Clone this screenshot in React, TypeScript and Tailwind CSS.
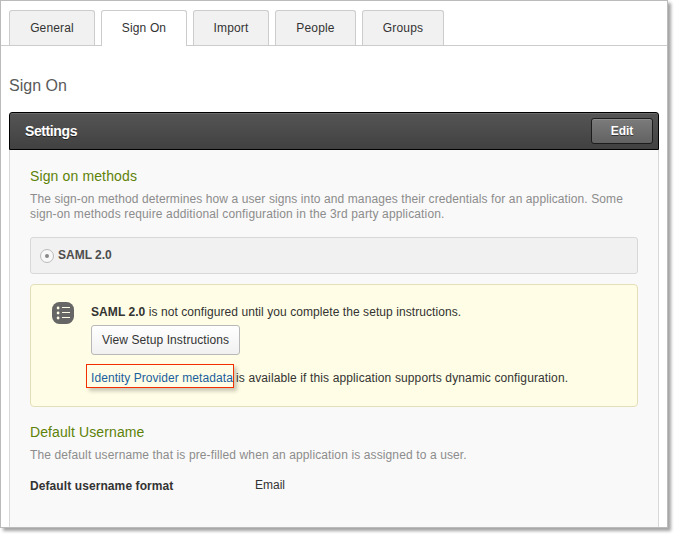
const tabs = [
  { label: 'General', width: 'w-[86px]' },
  { label: 'Sign On', width: 'w-[86px]', active: true },
  { label: 'Import', width: 'w-[76px]' },
  { label: 'People', width: 'w-[81px]' },
  { label: 'Groups', width: 'w-[82px]' },
];

function Tabs() {
  return (
    <nav className="flex h-[36px] gap-[6px] border-b border-[#cccccc] pl-2">
      {tabs.map((tab) => (
        <button
          key={tab.label}
          className={`${tab.width} ${
            tab.active ? 'h-[36px] bg-white' : 'h-[35px] bg-[#f1f1f1]'
          } flex shrink-0 justify-center rounded-t-[3px] border border-b-0 border-[#cccccc] pt-[9px] text-[12px] leading-4 tracking-[0.15px] text-[#333]`}
        >
          {tab.label}
        </button>
      ))}
    </nav>
  );
}

function ListIcon() {
  return (
    <svg className="block size-[22px]" viewBox="0 0 22 22">
      <rect width="22" height="22" rx="7.5" fill="#666666" />
      <g fill="#fffde5">
        <circle cx="6.1" cy="6" r="1.4" />
        <circle cx="6.1" cy="11" r="1.4" />
        <circle cx="6.1" cy="16" r="1.4" />
        <rect x="10" y="5" width="8" height="1" />
        <rect x="10" y="10" width="8" height="1" />
        <rect x="10" y="15" width="8" height="1" />
      </g>
    </svg>
  );
}

export default function App() {
  return (
    <div className="h-[534px] w-[674px] overflow-hidden bg-white font-['Liberation_Sans',Arial,sans-serif] text-[12px] text-[#333]">
      <div className="flex h-[528px] w-[668px] flex-col border border-[#bbbbbb] bg-white pt-[9px] shadow-[3px_3px_3px_rgba(0,0,0,0.36)]">
        <Tabs />
        <h1 className="mt-[30px] h-5 pl-2 text-[16px] leading-5 text-[#5a5a5a]">Sign On</h1>
        <section className="mx-2 mt-4 flex w-[650px] flex-1 flex-col">
          <header className="flex h-[38px] items-center justify-between rounded-t-[3px] border border-black bg-linear-to-b from-[#555] to-[#414141] pr-[5px] pl-[15px] shadow-[inset_0_1px_0_#6a6a6a]">
            <h2 className="text-[14px] font-bold tracking-[-0.4px] text-white [text-shadow:0_1px_0_#222]">Settings</h2>
            <button className="h-[26px] w-[62px] rounded-[3px] border border-[#1c1c1c] bg-linear-to-b from-[#7b7b7b] to-[#626262] pb-px text-[12px] font-bold text-white shadow-[inset_0_1px_0_#8c8c8c] [text-shadow:0_1px_0_#333]">
              Edit
            </button>
          </header>
          <div className="flex-1 border-x border-[#d8d8d8] bg-[#f9f9f9] px-5 pt-[17px]">
            <h3 className="h-[18px] text-[14px] leading-[18px] tracking-[0.13px] text-[#5e8208]">Sign on methods</h3>
            <p className="mt-[7px] text-[12px] leading-[15px] whitespace-nowrap text-[#8c8c8c]">
              <span className="tracking-[0.1px]">
                The sign-on method determines how a user signs into and manages their credentials for an application. Some
              </span>
              <br />
              <span className="tracking-[0.14px]">
                sign-on methods require additional configuration in the 3rd party application.
              </span>
            </p>
            <div className="mt-[15px] flex h-[37px] w-[608px] items-center rounded-[3px] border border-[#d8d8d8] bg-[#f1f1f1] pl-[9px]">
              <span className="flex size-[14px] items-center justify-center rounded-full border border-[#bbb] bg-[#f8f8f8]">
                <span className="size-1 rounded-full bg-[#888]" />
              </span>
              <b className="ml-1 pb-[2px] text-[#4d4d4d]">SAML 2.0</b>
            </div>
            <div className="mt-[10px] flex h-[123px] w-[608px] rounded-[4px] border border-[#e4dfb8] bg-[#fffde5] pt-[17px] pl-[21px]">
              <ListIcon />
              <div className="ml-[17px] flex flex-col items-start whitespace-nowrap">
                <p className="mt-[2px] h-4 leading-4 tracking-[0.07px]">
                  <b>SAML 2.0</b> is not configured until you complete the setup instructions.
                </p>
                <button className="mt-[5px] h-[30px] w-[149px] rounded-[3px] border border-[#b8b8b8] bg-linear-to-b from-white to-[#f1f1f1] text-[12px] tracking-[0.09px]">
                  View Setup Instructions
                </button>
                <p className="mt-[9px] -ml-[5px] flex h-6 items-center">
                  <a className="flex h-6 w-[148px] items-center border border-[#f22f00] pt-[3px] pl-1 tracking-[0.07px] text-[#1a5f9e] shadow-[3px_3px_4px_rgba(0,0,0,0.22)]">
                    Identity Provider metadata
                  </a>
                  <span className="ml-[2px] pt-[3px] tracking-[0.125px]">
                    is available if this application supports dynamic configuration.
                  </span>
                </p>
              </div>
            </div>
            <h3 className="mt-4 h-[18px] text-[14px] leading-[18px] tracking-[0.1px] text-[#5e8208]">Default Username</h3>
            <p className="mt-[7px] h-[15px] leading-[15px] tracking-[0.12px] whitespace-nowrap text-[#8c8c8c]">
              The default username that is pre-filled when an application is assigned to a user.
            </p>
            <div className="mt-[14px] flex">
              <b className="w-[225px] pt-px leading-4 tracking-[0.09px]">Default username format</b>
              <span className="leading-4">Email</span>
            </div>
          </div>
        </section>
      </div>
    </div>
  );
}
